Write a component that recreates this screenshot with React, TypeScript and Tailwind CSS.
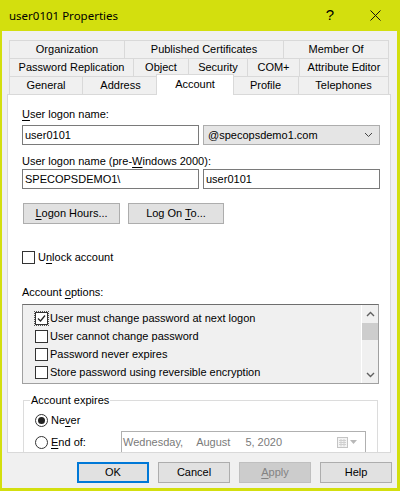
import React from 'react';

const dlg = "font-['Liberation_Sans',Arial,sans-serif] text-[11px] leading-[13px] text-black";

function U({ children }: { children: React.ReactNode }) {
  return <span className="underline underline-offset-[2px] decoration-[1px]">{children}</span>;
}

function Check({ checked = false }: { checked?: boolean }) {
  return (
    <span className="flex h-[13px] w-[13px] shrink-0 items-center justify-center border border-[#333333] bg-white">
      {checked && (
        <svg width="9" height="9" viewBox="0 0 9 9">
          <path d="M1 4.5 L3.5 7 L8 1.5" fill="none" stroke="#222" strokeWidth="1.2" />
        </svg>
      )}
    </span>
  );
}

function Radio({ checked = false }: { checked?: boolean }) {
  return (
    <span className="flex h-[13px] w-[13px] shrink-0 items-center justify-center rounded-full border border-[#333333] bg-white">
      {checked && <span className="h-[7px] w-[7px] rounded-full bg-[#222222]" />}
    </span>
  );
}

function Chevron({ up = false }: { up?: boolean }) {
  return (
    <svg width="9" height="6" viewBox="0 0 9 6">
      <path d={up ? 'M1 5 L4.5 1.5 L8 5' : 'M1 1 L4.5 4.5 L8 1'} fill="none" stroke="#606060" strokeWidth="1.4" />
    </svg>
  );
}

const row1 = [
  { label: 'Organization', w: 'w-[115px]' },
  { label: 'Published Certificates', w: 'w-[159px]' },
  { label: 'Member Of', w: 'w-[106px] border-r' },
];

const row2 = [
  { label: 'Password Replication', w: 'w-[124px]' },
  { label: 'Object', w: 'w-[55px]' },
  { label: 'Security', w: 'w-[59px]' },
  { label: 'COM+', w: 'w-[52px]' },
  { label: 'Attribute Editor', w: 'w-[90px] border-r' },
];

const options = [
  'User must change password at next logon',
  'User cannot change password',
  'Password never expires',
  'Store password using reversible encryption',
];

function Tab({ label, w }: { label: string; w: string }) {
  return (
    <div className={`flex items-center justify-center border-t border-l border-[#d9d9d9] ${w}`}>{label}</div>
  );
}

export default function App() {
  return (
    <div className="flex h-[491px] w-[400px] flex-col bg-[#d3df0e]">
      {/* title bar */}
      <div className="flex h-[31px] shrink-0 items-center pl-[9px] font-['Noto_Sans',sans-serif] text-[11.5px] text-black">
        <span>user0101 Properties</span>
        <span className="ml-auto mr-[36px] font-['Liberation_Sans',sans-serif] text-[15px]">?</span>
        <svg width="11" height="11" viewBox="0 0 11 11" className="mr-[19px]">
          <path d="M0.5 0.5 L10.5 10.5 M10.5 0.5 L0.5 10.5" stroke="#111" strokeWidth="1" />
        </svg>
      </div>

      <div className={`ml-[2px] mr-[3px] mb-[3px] flex-1 bg-[#f0f0f0] pl-[5px] pt-[9px] ${dlg}`}>
        {/* tabs */}
        <div className="ml-[2px] w-[380px]">
          <div className="flex h-[18px]">
            {row1.map((t) => (
              <Tab key={t.label} {...t} />
            ))}
          </div>
          <div className="flex h-[18px]">
            {row2.map((t) => (
              <Tab key={t.label} {...t} />
            ))}
          </div>
          <div className="flex h-[18px]">
            <Tab label="General" w="w-[73px]" />
            <Tab label="Address" w="w-[76px]" />
            <div className="relative z-10 -mx-[2px] -mt-[2px] flex h-[21px] w-[78px] shrink-0 items-center justify-center border border-b-0 border-[#d9d9d9] bg-white pb-[1px]">
              Account
            </div>
            <Tab label="Profile" w="w-[66px]" />
            <Tab label="Telephones" w="w-[91px] border-r" />
          </div>
        </div>

        {/* panel */}
        <div className="h-[359px] w-[384px] overflow-hidden border border-[#d9d9d9] bg-white pl-[14px] pt-[13px]">
          <div>
            <U>U</U>ser logon name:
          </div>
          <div className="mt-[4px] flex gap-[4px]">
            <div className="flex h-[20px] w-[177px] items-center border border-[#7a7a7a] bg-white pl-[2px]">user0101</div>
            <div className="flex h-[20px] w-[177px] items-center border border-[#adadad] bg-[#e5e5e5] pl-[4px] pr-[6px]">
              <span>@specopsdemo1.com</span>
              <span className="ml-auto">
                <svg width="9" height="6" viewBox="0 0 9 6">
                  <path d="M1 1 L4.5 4.5 L8 1" fill="none" stroke="#444" strokeWidth="1" />
                </svg>
              </span>
            </div>
          </div>

          <div className="mt-[10px]">
            User logon name (pre-<U>W</U>indows 2000):
          </div>
          <div className="mt-[1px] flex gap-[4px]">
            <div className="flex h-[20px] w-[177px] items-center border border-[#7a7a7a] bg-white pl-[2px]">SPECOPSDEMO1\</div>
            <div className="flex h-[20px] w-[177px] items-center border border-[#7a7a7a] bg-white pl-[2px]">user0101</div>
          </div>

          <div className="ml-[1px] mt-[14px] flex gap-[8px]">
            <div className="flex h-[21px] w-[97px] items-center justify-center border border-[#adadad] bg-[#e1e1e1]">
              <span>
                <U>L</U>ogon Hours...
              </span>
            </div>
            <div className="flex h-[21px] w-[96px] items-center justify-center border border-[#adadad] bg-[#e1e1e1]">
              <span>
                Log On <U>T</U>o...
              </span>
            </div>
          </div>

          <div className="mt-[27px] flex h-[13px] items-center gap-[3px]">
            <Check />
            <span>
              U<U>n</U>lock account
            </span>
          </div>

          <div className="mt-[22px]">
            Account <U>o</U>ptions:
          </div>

          <div className="mt-[5px] flex h-[80px] w-[357px] border border-[#a0a0a0] border-t-[#6e6e6e] bg-[#f0f0f0]">
            <div className="flex-1 pl-[11px] pt-[4px]">
              {options.map((o, i) => (
                <div key={o} className="flex h-[18px] items-center gap-[1px]">
                  <span className={i === 0 ? 'flex border border-dotted border-[#555555]' : 'flex border border-transparent'}>
                    <Check checked={i === 0} />
                  </span>
                  <span>{o}</span>
                </div>
              ))}
            </div>
            <div className="flex w-[17px] flex-col border-l border-white bg-[#f0f0f0]">
              <div className="flex h-[17px] items-center justify-center">
                <Chevron up />
              </div>
              <div className="mt-[1px] h-[17px] bg-[#cdcdcd]" />
              <div className="mt-auto flex h-[17px] items-center justify-center">
                <Chevron />
              </div>
            </div>
          </div>

          <fieldset className="ml-[1px] mt-[10px] w-[355px] border border-[#dcdcdc]">
            <legend className="ml-[6px] px-[1px]">Account expires</legend>
            <div className="pl-[11px]">
              <div className="mt-[3px] flex h-[21px] items-center gap-[3px]">
                <Radio checked />
                <span>
                  Ne<U>v</U>er
                </span>
              </div>
              <div className="flex h-[22px] items-center">
                <div className="flex w-[86px] items-center gap-[3px]">
                  <Radio />
                  <span>
                    <U>E</U>nd of:
                  </span>
                </div>
                <div className="flex h-[22px] w-[245px] items-center border border-[#b0b0b0] bg-white pl-[1px] pr-[8px] text-[#7a7a7a]">
                  <span>Wednesday,</span>
                  <span className="ml-[13px]">August</span>
                  <span className="ml-[15px]">5, 2020</span>
                  <span className="ml-auto flex items-center gap-[2px]">
                    <svg width="11" height="11" viewBox="0 0 11 11">
                      <rect x="0.5" y="0.5" width="10" height="10" fill="#f4f4f4" stroke="#c4c4c4" />
                      <path d="M2 3.5 H9 M2 5.5 H9 M2 7.5 H9 M4 2 V9.5 M7 2 V9.5" stroke="#d0d0d0" strokeWidth="1" />
                    </svg>
                    <svg width="7" height="4" viewBox="0 0 7 4">
                      <path d="M0 0 H7 L3.5 4 Z" fill="#b8b8b8" />
                    </svg>
                  </span>
                </div>
              </div>
              <div className="h-[20px]" />
            </div>
          </fieldset>
        </div>

        {/* footer buttons */}
        <div className="mt-[9px] flex justify-end gap-[9px] pr-[5px]">
          <div className="flex h-[21px] w-[72px] items-center justify-center border-2 border-[#0078d7] bg-[#e1e1e1]">OK</div>
          <div className="flex h-[21px] w-[72px] items-center justify-center border border-[#adadad] bg-[#e1e1e1]">Cancel</div>
          <div className="flex h-[21px] w-[72px] items-center justify-center border border-[#bfbfbf] bg-[#cccccc] text-[#838383]">
            <span>
              <U>A</U>pply
            </span>
          </div>
          <div className="flex h-[21px] w-[72px] items-center justify-center border border-[#adadad] bg-[#e1e1e1]">Help</div>
        </div>
      </div>
    </div>
  );
}
